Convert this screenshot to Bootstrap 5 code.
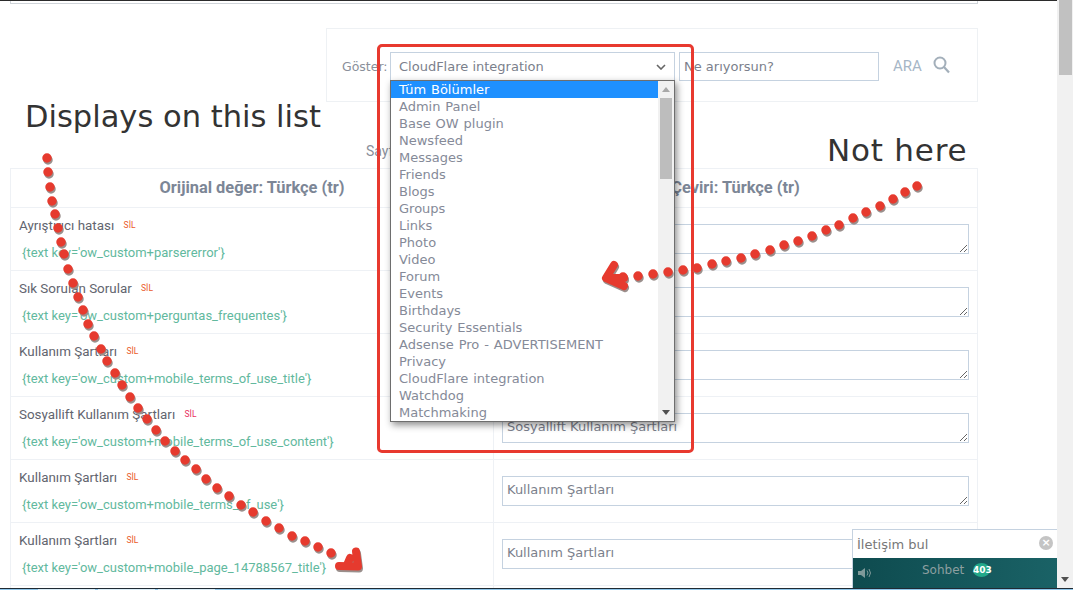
<!DOCTYPE html>
<html lang="tr">
<head>
<meta charset="utf-8">
<title>Çeviri</title>
<link href="https://cdn.jsdelivr.net/npm/bootstrap@5.3.0/dist/css/bootstrap.min.css" rel="stylesheet">
<style>
html,body{height:590px;overflow:hidden;background:#fff}
body{position:relative;font-family:"DejaVu Sans",sans-serif;color:#7f8592}
.page-wrap{width:1057px;height:590px;overflow:hidden;padding:0 79px 0 10px}
.top-box{height:4px;border:1px solid #cfd4d9;border-top:0}
.filter-wrap{margin:24px 0 0 316px;height:74px;border:1px solid #eef1f4;padding:23px 0 0 15px}
.filter-label{width:48px;color:#8a8f9a;font-size:12.5px;line-height:29px}
.select-mock{width:285px;height:29px;border:1px solid #c5d2e0;padding:0 8px;font-size:13px;color:#7b7f8c}
.query-mock{width:200px;height:29px;border:1px solid #c5d2e0;margin-left:4px;padding:0 4px;font-size:13px;color:#7b7f8c}
.ara{margin-left:14px;width:40px;height:29px;color:#a6b6c6;font-family:Roboto,sans-serif;font-size:15px}
.say-line{font-family:Roboto,sans-serif;font-size:14px;height:66px;padding:39px 0 0 356px;color:#8a8f9a}
.tr-table{width:968px;border-collapse:collapse;table-layout:fixed;margin:0}
.tr-table th,.tr-table td{border:1px solid #eef1f5;padding:0;vertical-align:top}
.tr-table th{height:39px;text-align:center;vertical-align:middle;font-family:Roboto,sans-serif;font-size:16.4px;font-weight:700;color:#7c8696}
.tr-table td{height:63px}
.cell-a{padding:8px 8px 0 8px!important;font-family:Roboto,sans-serif}
.lbl{font-size:13.4px;color:#62656f;line-height:19px}
.sil{font-size:8.5px;margin-left:6px;vertical-align:2px;color:#ea5a2a}
.sil-pink{color:#e8305f}
.key{margin:9px 0 0 3px;font-size:13px;line-height:18px;color:#62b99e}
.cell-b{padding:16px 8px 0 8px!important}
.ta-mock{display:block;width:467px;height:30px;border:1px solid #c5d2e0;border-radius:0;padding:4px 4px;font:13px/17px "DejaVu Sans",sans-serif;color:#7b7f8c;resize:vertical;overflow:hidden;background:#fff}
.scroll-rail{position:absolute;top:0;right:0;width:16px;height:590px;background:#f1f1f1}
.scroll-thumb{position:absolute;top:0;left:2px;width:13px;height:75px;background:#c1c1c1}
.top-dark{position:absolute;top:0;left:0;width:1057px;height:1px;background:#2b2b2b}
.bottom-dark{position:absolute;left:0;right:0;bottom:0;height:2px;border-top:1px solid #1f2a33;background:#8fc6ea;display:flex}
.task-gap{width:38px}
.task-tab{width:57px;background:#dceef8;margin-right:3px}
.list-pop{position:absolute;left:390px;top:80px;width:285px;height:342px;background:#fff;border:1px solid #6e6e6e;box-shadow:2px 3px 7px rgba(0,0,0,.45);display:flex;font-size:13px;line-height:17px;color:#858a98;word-spacing:.8px}
.list-items{flex:1;min-width:0}
.list-items div{padding-left:8px;height:17px}
.list-items .on{background:#1e90ff;color:#fff}
.list-rail{width:16px;background:#f1f1f1;position:relative}
.list-thumb{position:absolute;top:17px;left:2px;width:12px;height:81px;background:#bdbdbd}
.tri-up,.tri-down{position:absolute;left:4px;width:0;height:0;border-left:4px solid transparent;border-right:4px solid transparent}
.tri-up{top:6px;border-bottom:5px solid #a8a8a8}
.tri-down{bottom:6px;border-top:5px solid #505050}
.red-frame{position:absolute;left:377px;top:44px;width:317px;height:409px;border:3px solid #e8392f;border-radius:5px;pointer-events:none}
.anno{position:absolute;font-family:"DejaVu Sans",sans-serif;color:#333;line-height:1;white-space:nowrap}
.anno-a{left:25px;top:102px;font-size:30.5px}
.anno-b{left:827px;top:135px;font-size:31px;letter-spacing:.8px}
.dots{position:absolute;left:0;top:0;pointer-events:none}
.chat-box{position:absolute;left:852px;top:529px;width:205px;height:59px;background:#fff;border:solid #c5d2e0;border-width:1px 0 0 1px}
.chat-head{height:28px;padding:5px 4px;font-size:13px;color:#777}
.chat-x{position:absolute;right:4px;top:6px;width:14px;height:14px;border-radius:50%;background:#c4c4c4;color:#fff;font:700 11px/14px "DejaVu Sans",sans-serif;text-align:center}
.chat-foot{height:30px;background:linear-gradient(90deg,#0e4b4f,#1a6266);color:#8d9fa0;font-size:12px;padding-top:2px;position:relative}
.chat-name{position:absolute;left:69px;top:3px}
.chat-num{position:absolute;left:120px;top:5px;width:17px;height:14px;border-radius:50%;background:#22a88a;color:#fff;font:700 9px/14px "DejaVu Sans",sans-serif;text-align:center}
.chat-vol{position:absolute;left:5px;top:9px}
</style>
</head>
<body>
<div class="page-wrap">
  <div class="top-box"></div>
  <div class="filter-wrap d-flex align-items-start">
    <span class="filter-label">Göster:</span>
    <div class="select-mock d-flex align-items-center justify-content-between"><span>CloudFlare integration</span>
      <svg width="10" height="6" viewBox="0 0 10 6"><path d="M1 1l4 4 4-4" fill="none" stroke="#666" stroke-width="1.6"/></svg></div>
    <div class="query-mock d-flex align-items-center">Ne arıyorsun?</div>
    <div class="ara d-flex align-items-center">ARA</div>
    <svg class="mt-1" width="17" height="18" viewBox="0 0 17 18"><circle cx="7" cy="7" r="5.5" fill="none" stroke="#a3afba" stroke-width="2"/><path d="M11 11l5 5.5" stroke="#a3afba" stroke-width="2.2"/></svg>
  </div>
  <div class="say-line">Sayfa 1</div>
  <table class="tr-table">
    <colgroup><col style="width:483px"><col></colgroup>
    <thead><tr><th>Orijinal değer: Türkçe (tr)</th><th>Çeviri: Türkçe (tr)</th></tr></thead>
    <tbody>
      <tr><td class="cell-a"><div class="lbl">Ayrıştırıcı hatası <span class="sil">SİL</span></div><div class="key">{text key='ow_custom+parsererror'}</div></td><td class="cell-b"><textarea class="ta-mock" aria-label="Çeviri"></textarea></td></tr>
      <tr><td class="cell-a"><div class="lbl">Sık Sorulan Sorular <span class="sil">SİL</span></div><div class="key">{text key='ow_custom+perguntas_frequentes'}</div></td><td class="cell-b"><textarea class="ta-mock" aria-label="Çeviri"></textarea></td></tr>
      <tr><td class="cell-a"><div class="lbl">Kullanım Şartları <span class="sil">SİL</span></div><div class="key">{text key='ow_custom+mobile_terms_of_use_title'}</div></td><td class="cell-b"><textarea class="ta-mock" aria-label="Çeviri"></textarea></td></tr>
      <tr><td class="cell-a"><div class="lbl">Sosyallift Kullanım Şartları <span class="sil sil-pink">SİL</span></div><div class="key">{text key='ow_custom+mobile_terms_of_use_content'}</div></td><td class="cell-b"><textarea class="ta-mock" aria-label="Çeviri">Sosyallift Kullanım Şartları</textarea></td></tr>
      <tr><td class="cell-a"><div class="lbl">Kullanım Şartları <span class="sil">SİL</span></div><div class="key">{text key='ow_custom+mobile_terms_of_use'}</div></td><td class="cell-b"><textarea class="ta-mock" aria-label="Çeviri">Kullanım Şartları</textarea></td></tr>
      <tr><td class="cell-a"><div class="lbl">Kullanım Şartları <span class="sil">SİL</span></div><div class="key">{text key='ow_custom+mobile_page_14788567_title'}</div></td><td class="cell-b"><textarea class="ta-mock" aria-label="Çeviri">Kullanım Şartları</textarea></td></tr>
      <tr><td></td><td></td></tr>
    </tbody>
  </table>
</div>

<div class="top-dark"></div>
<div class="scroll-rail"><div class="scroll-thumb"></div><div class="tri-down" style="bottom:8px"></div></div>
<div class="bottom-dark"><div class="task-gap"></div><div class="task-tab"></div><div class="task-tab"></div><div class="task-tab"></div></div>

<div class="red-frame"></div>
<div class="list-pop">
  <div class="list-items">
    <div class="on">Tüm Bölümler</div><div>Admin Panel</div><div>Base OW plugin</div><div>Newsfeed</div><div>Messages</div><div>Friends</div><div>Blogs</div><div>Groups</div><div>Links</div><div>Photo</div><div>Video</div><div>Forum</div><div>Events</div><div>Birthdays</div><div>Security Essentials</div><div>Adsense Pro - ADVERTISEMENT</div><div>Privacy</div><div>CloudFlare integration</div><div>Watchdog</div><div>Matchmaking</div>
  </div>
  <div class="list-rail"><div class="tri-up"></div><div class="list-thumb"></div><div class="tri-down"></div></div>
</div>

<div class="anno anno-a">Displays on this list</div>
<div class="anno anno-b">Not here</div>

<svg class="dots" width="1073" height="590" viewBox="0 0 1073 590" aria-hidden="true">
  <g fill="none" stroke-linecap="round" stroke-linejoin="round">
    <g transform="translate(1 2)" stroke="#9a8f8c">
      <path stroke-width="9.5" d="M47 158h0M48 172h0M50 187h0M52 201h0M55 214h0M58 228h0M61 242h0M64 254h0M68 269h0M73 283h0M78 297h0M83 310h0M88 324h0M94 336h0M101 349h0M107 361h0M115 373h0M122 385h0M130 397h0M138 408h0M147 419h0M156 430h0M165 441h0M175 451h0M185 460h0M196 469h0M206 479h0M217 488h0M229 496h0M241 505h0M253 512h0M266 521h0M279 528h0M292 536h0M305 541h0M318 547h0M331 553h0"/>
      <path stroke-width="9.5" d="M917 186h0M905 192h0M893 199h0M880 206h0M866 212h0M853 218h0M839 225h0M826 230h0M812 236h0M798 241h0M784 245h0M770 250h0M755 254h0M741 258h0M726 261h0M712 264h0M697 268h0M683 270h0M668 272h0M653 274h0M638 276h0M623 277h0"/>
      <path stroke-width="8" d="M339 566l19 0.5-2-15M347 565l3-7"/>
      <path stroke-width="8" d="M614 265l-8 13 18 8M612 278l12 0"/>
    </g>
    <g stroke="#e63a2e">
      <path stroke-width="9.5" d="M47 158h0M48 172h0M50 187h0M52 201h0M55 214h0M58 228h0M61 242h0M64 254h0M68 269h0M73 283h0M78 297h0M83 310h0M88 324h0M94 336h0M101 349h0M107 361h0M115 373h0M122 385h0M130 397h0M138 408h0M147 419h0M156 430h0M165 441h0M175 451h0M185 460h0M196 469h0M206 479h0M217 488h0M229 496h0M241 505h0M253 512h0M266 521h0M279 528h0M292 536h0M305 541h0M318 547h0M331 553h0"/>
      <path stroke-width="9.5" d="M917 186h0M905 192h0M893 199h0M880 206h0M866 212h0M853 218h0M839 225h0M826 230h0M812 236h0M798 241h0M784 245h0M770 250h0M755 254h0M741 258h0M726 261h0M712 264h0M697 268h0M683 270h0M668 272h0M653 274h0M638 276h0M623 277h0"/>
      <path stroke-width="8" d="M339 566l19 0.5-2-15M347 565l3-7"/>
      <path stroke-width="8" d="M614 265l-8 13 18 8M612 278l12 0"/>
    </g>
  </g>
</svg>

<div class="chat-box">
  <div class="chat-head">İletişim bul<span class="chat-x">×</span></div>
  <div class="chat-foot">
    <svg class="chat-vol" width="14" height="12" viewBox="0 0 14 12"><path d="M0 4h3l4-3v10L3 8H0z" fill="#7f9a9a"/><path d="M9 3.5q2 2.5 0 5M11 2q3 4 0 8" fill="none" stroke="#7f9a9a"/></svg>
    <span class="chat-name">Sohbet</span><span class="chat-num">403</span>
  </div>
</div>
<script src="https://cdn.jsdelivr.net/npm/bootstrap@5.3.0/dist/js/bootstrap.bundle.min.js"></script>
</body>
</html>
